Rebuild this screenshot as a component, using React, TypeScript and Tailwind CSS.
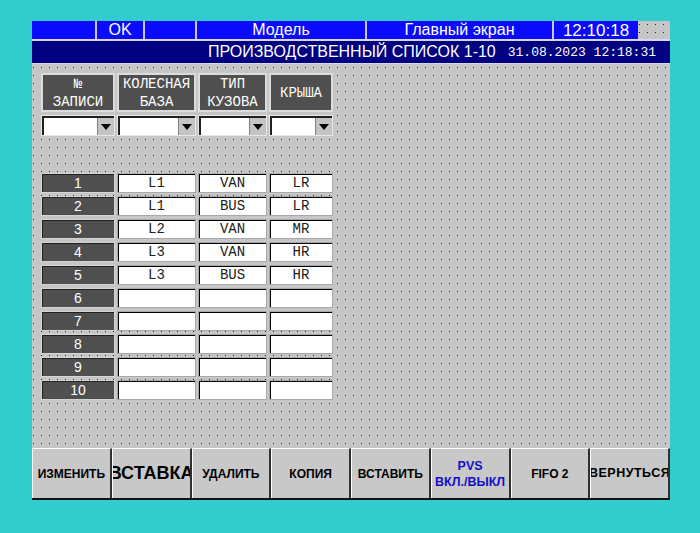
import React from "react";

const rows: [string, string, string][] = [
  ["L1", "VAN", "LR"],
  ["L1", "BUS", "LR"],
  ["L2", "VAN", "MR"],
  ["L3", "VAN", "HR"],
  ["L3", "BUS", "HR"],
  ["", "", ""],
  ["", "", ""],
  ["", "", ""],
  ["", "", ""],
  ["", "", ""],
];

function Dropdown() {
  return (
    <div className="h-[21px] border border-[#e8e8e8] bg-white flex">
      <div className="flex-1 flex border-t-2 border-l-2 border-t-[#202020] border-l-[#202020]">
        <div className="flex-1" />
        <div className="w-[17px] bg-[#c4c4c4] border-l border-[#808080] flex items-center justify-center">
          <div className="w-0 h-0 border-l-[5px] border-r-[5px] border-t-[6px] border-l-transparent border-r-transparent border-t-black" />
        </div>
      </div>
    </div>
  );
}

function Cell({ v }: { v: string }) {
  return (
    <div className="h-[20px] border border-[#a8a8a8] bg-white shadow-[inset_1px_1px_0_#000] flex items-center justify-center font-['Liberation_Mono',monospace] text-[14px] leading-none text-[#202020]">
      {v}
    </div>
  );
}

function Btn({ children, className = "" }: { children: React.ReactNode; className?: string }) {
  return (
    <div
      className={
        "w-[80px] h-full bg-[#c8c8c8] border-t border-l border-t-white border-l-white border-r-2 border-r-[#303030] overflow-hidden flex flex-col items-center justify-center whitespace-nowrap font-['Liberation_Sans',Arial,sans-serif] font-bold " +
        className
      }
    >
      {children}
    </div>
  );
}

const dots =
  "bg-[#c6c6c6] bg-[radial-gradient(circle_at_0.5px_0.5px,#1a1a1a_0.55px,transparent_0.85px)] bg-[size:8px_8px] bg-[position:1px_3px]";

export default function App() {
  return (
    <div className="w-[700px] h-[533px] bg-[#32cccc] overflow-hidden">
      <div className="ml-[32px] pt-[21px] w-[638px] font-['Liberation_Sans',Arial,sans-serif]">
        {/* top bar */}
        <div className="flex h-[18px] text-white text-[16px] leading-none">
          <div className="w-[63px] bg-[#0a0aff]" />
          <div className="w-[2px] bg-[#c8c8d8]" />
          <div className="w-[46px] bg-[#0a0aff] flex items-center justify-center">OK</div>
          <div className="w-[2px] bg-[#c8c8d8]" />
          <div className="w-[50px] bg-[#0a0aff]" />
          <div className="w-[2px] bg-[#c8c8d8]" />
          <div className="w-[168px] bg-[#0a0aff] flex items-center justify-center">Модель</div>
          <div className="w-[2px] bg-[#c8c8d8]" />
          <div className="w-[185px] bg-[#0a0aff] flex items-center justify-center">Главный экран</div>
          <div className="w-[2px] bg-[#c8c8d8]" />
          <div className="w-[84px] bg-[#0a0aff] flex items-center justify-center text-[17px]">12:10:18</div>
          <div className={"flex-1 " + dots} />
        </div>
        {/* header */}
        <div className="h-[25px] bg-[#000080] border-t-2 border-b border-[#d8d8e8] flex items-center justify-end pr-[14px] text-white">
          <span className="text-[16px] leading-none">ПРОИЗВОДСТВЕННЫЙ СПИСОК 1-10</span>
          <span className="ml-[12px] font-['Liberation_Mono',monospace] text-[13px] leading-none">31.08.2023 12:18:31</span>
        </div>
        {/* body */}
        <div className={"h-[384px] pl-[9px] pt-[9px] " + dots}>
          <div className="grid grid-cols-[74px_79px_69px_64px] gap-x-[2px]">
            {[["№", "ЗАПИСИ"], ["КОЛЕСНАЯ", "БАЗА"], ["ТИП", "КУЗОВА"], ["КРЫША"]].map((h, i) => (
              <div
                key={i}
                className="h-[39px] bg-[#4f4f4f] border-2 border-[#dcdcdc] flex flex-col items-center justify-center text-white font-['Liberation_Mono',monospace] text-[14px] leading-[18px] whitespace-nowrap overflow-hidden"
              >
                {h.map((t, j) => (
                  <span key={j}>{t}</span>
                ))}
              </div>
            ))}
          </div>
          <div className="grid grid-cols-[74px_79px_69px_64px] gap-x-[2px] mt-[3px]">
            <Dropdown />
            <Dropdown />
            <Dropdown />
            <Dropdown />
          </div>
          <div className="mt-[37px] flex flex-col gap-[3px]">
            {rows.map((r, i) => (
              <div key={i} className="grid grid-cols-[74px_79px_69px_64px] gap-x-[2px]">
                <div className="h-[20px] bg-[#4f4f4f] border border-[#d4d4d4] shadow-[inset_1px_1px_0_#202020] flex items-center justify-center text-white text-[14px] leading-none">
                  {i + 1}
                </div>
                <Cell v={r[0]} />
                <Cell v={r[1]} />
                <Cell v={r[2]} />
              </div>
            ))}
          </div>
        </div>
        {/* buttons */}
        <div className="h-[52px] flex border-b-2 border-[#101010]">
          <Btn className="text-[12px] w-[79px]">ИЗМЕНИТЬ</Btn>
          <Btn className="text-[18px]">ВСТАВКА</Btn>
          <Btn className="text-[12px]">УДАЛИТЬ</Btn>
          <Btn className="text-[12px]">КОПИЯ</Btn>
          <Btn className="text-[12px]">ВСТАВИТЬ</Btn>
          <Btn className="text-[12.5px] text-[#1010c8] leading-[16px]">
            <span>PVS</span>
            <span>ВКЛ./ВЫКЛ</span>
          </Btn>
          <Btn className="text-[12px]">FIFO 2</Btn>
          <Btn className="text-[12.5px] tracking-[0.5px] w-[79px]">ВЕРНУТЬСЯ</Btn>
        </div>
      </div>
    </div>
  );
}
